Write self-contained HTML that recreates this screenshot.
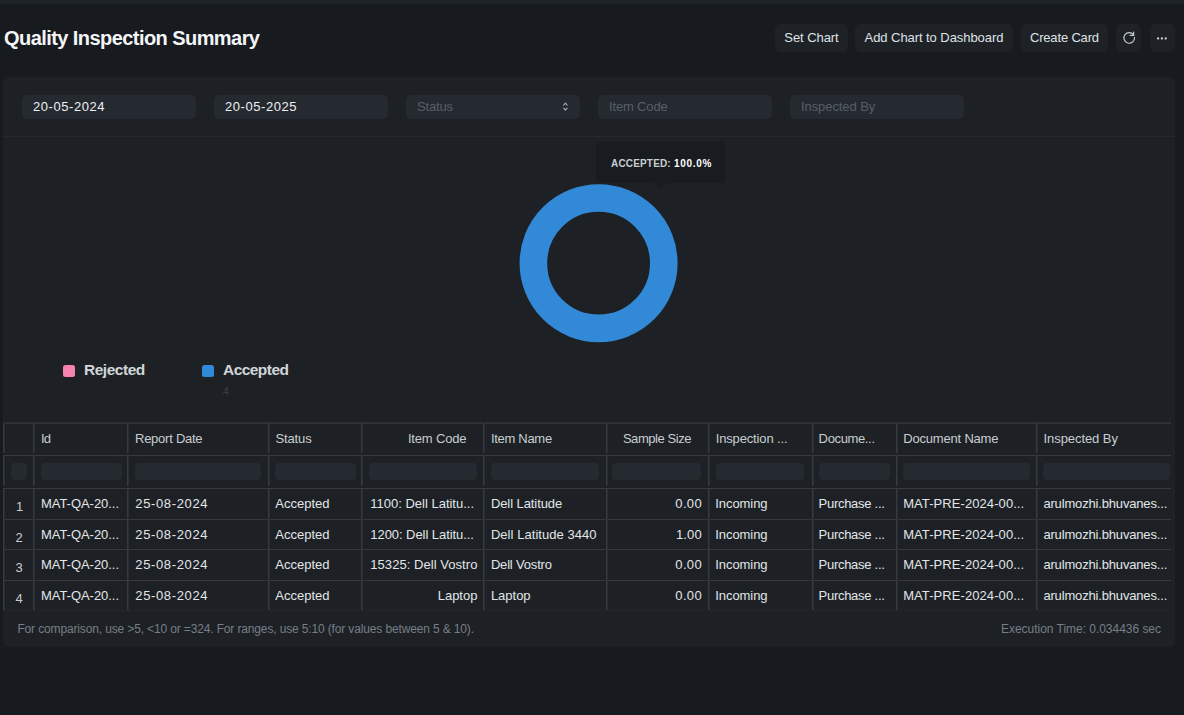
<!DOCTYPE html>
<html><head><meta charset="utf-8">
<style>
*{box-sizing:border-box;margin:0;padding:0}
html,body{width:1184px;height:715px;overflow:hidden;background:#171a1f;font-family:"Liberation Sans",sans-serif}
.b{position:absolute}
.t{position:absolute;white-space:nowrap}
</style></head><body>
<div class="b" style="left:0;top:0;width:1184px;height:4px;background:#1e2327"></div>
<div class="t" style="left:4.00px;top:23.99px;font-size:20px;line-height:28px;letter-spacing:-0.564px;color:#f4f5f6;font-weight:bold;">Quality Inspection Summary</div>
<div class="b" style="left:775px;top:24px;width:73px;height:28px;background:#1e2226;border-radius:6px"></div>
<div class="t" style="left:784.35px;top:28.70px;font-size:13px;line-height:18px;letter-spacing:-0.075px;color:#dfe3e6;font-weight:normal;">Set Chart</div>
<div class="b" style="left:855px;top:24px;width:158px;height:28px;background:#1e2226;border-radius:6px"></div>
<div class="t" style="left:864.60px;top:28.70px;font-size:13px;line-height:18px;letter-spacing:-0.067px;color:#dfe3e6;font-weight:normal;">Add Chart to Dashboard</div>
<div class="b" style="left:1021px;top:24px;width:87px;height:28px;background:#1e2226;border-radius:6px"></div>
<div class="t" style="left:1029.95px;top:28.70px;font-size:13px;line-height:18px;letter-spacing:-0.170px;color:#dfe3e6;font-weight:normal;">Create Card</div>
<div class="b" style="left:1116px;top:24px;width:25px;height:28px;background:#1e2226;border-radius:6px"></div>
<div class="b" style="left:1149.5px;top:24px;width:25px;height:28px;background:#1e2226;border-radius:6px"></div>
<svg class="b" style="left:1116px;top:24px" width="25" height="27" viewBox="0 0 25 27"><path d="M18.48 13.44 A5.3 5.3 0 1 1 17.74 11.17" fill="none" stroke="#c4c9ce" stroke-width="1.15" stroke-linecap="round"/><path d="M17.6 8.0 L17.6 11.4 L14.1 11.4" fill="none" stroke="#c4c9ce" stroke-width="1.15" stroke-linecap="round" stroke-linejoin="round"/></svg>
<svg class="b" style="left:1150px;top:24px" width="25" height="28" viewBox="0 0 25 28"><circle cx="8.1" cy="14.5" r="1.15" fill="#c8cdd2"/><circle cx="11.9" cy="14.5" r="1.15" fill="#c8cdd2"/><circle cx="15.7" cy="14.5" r="1.15" fill="#c8cdd2"/></svg>
<div class="b" style="left:3px;top:77px;width:1172px;height:570px;background:#1d2125;border-radius:6px"></div>
<div class="b" style="left:22px;top:94.5px;width:173.5px;height:24px;background:#252a30;border-radius:5px"></div>
<div class="t" style="left:33.00px;top:97.70px;font-size:13px;line-height:18px;letter-spacing:0.556px;color:#eef0f2;font-weight:normal;">20-05-2024</div>
<div class="b" style="left:214px;top:94.5px;width:173.5px;height:24px;background:#252a30;border-radius:5px"></div>
<div class="t" style="left:225.00px;top:97.70px;font-size:13px;line-height:18px;letter-spacing:0.556px;color:#eef0f2;font-weight:normal;">20-05-2025</div>
<div class="b" style="left:406px;top:94.5px;width:173.5px;height:24px;background:#252a30;border-radius:5px"></div>
<div class="t" style="left:417.00px;top:97.70px;font-size:13px;line-height:18px;letter-spacing:-0.170px;color:#575f66;font-weight:normal;">Status</div>
<div class="b" style="left:598px;top:94.5px;width:173.5px;height:24px;background:#252a30;border-radius:5px"></div>
<div class="t" style="left:609.00px;top:97.70px;font-size:13px;line-height:18px;letter-spacing:-0.156px;color:#575f66;font-weight:normal;">Item Code</div>
<div class="b" style="left:790px;top:94.5px;width:173.5px;height:24px;background:#252a30;border-radius:5px"></div>
<div class="t" style="left:801.00px;top:97.70px;font-size:13px;line-height:18px;letter-spacing:-0.077px;color:#575f66;font-weight:normal;">Inspected By</div>
<svg class="b" style="left:560px;top:100px" width="10" height="12" viewBox="0 0 10 12"><path d="M3.7 5.1 L5.4 3.2 L7.1 5.1 M3.7 8.2 L5.4 10.1 L7.1 8.2" fill="none" stroke="#a7aeb4" stroke-width="1.1" stroke-linecap="round" stroke-linejoin="round"/></svg>
<div class="b" style="left:3px;top:136px;width:1172px;height:1px;background:#25292e"></div>
<svg class="b" style="left:0;top:0" width="1184" height="715"><circle cx="598.6" cy="263.2" r="65.2" fill="none" stroke="#3189d8" stroke-width="27.6"/></svg>
<div class="b" style="left:596px;top:142px;width:130px;height:41px;background:#181b1f;border-radius:5px"></div>
<svg class="b" style="left:653px;top:182px" width="16" height="8" viewBox="0 0 16 8"><path d="M0 0 L8 6.5 L16 0 Z" fill="#181b1f"/></svg>
<div class="t" style="left:611.00px;top:157.19px;font-size:10px;line-height:14px;letter-spacing:0.169px;color:#c8cdd2;font-weight:bold;">ACCEPTED:</div>
<div class="t" style="left:674.00px;top:157.19px;font-size:10px;line-height:14px;letter-spacing:0.680px;color:#ffffff;font-weight:bold;">100.0%</div>
<div class="b" style="left:63px;top:365px;width:11.5px;height:11.5px;background:#f683ae;border-radius:2.5px"></div>
<div class="t" style="left:84.00px;top:359.18px;font-size:15.5px;line-height:22px;letter-spacing:-0.471px;color:#d0d5d8;font-weight:bold;">Rejected</div>
<div class="b" style="left:202px;top:365px;width:11.5px;height:11.5px;background:#318ad8;border-radius:2.5px"></div>
<div class="t" style="left:223.00px;top:359.18px;font-size:15.5px;line-height:22px;letter-spacing:-0.550px;color:#d0d5d8;font-weight:bold;">Accepted</div>
<div class="t" style="left:223.00px;top:383.53px;font-size:10.5px;line-height:15px;letter-spacing:0.000px;color:#3b4147;font-weight:normal;">4</div>
<div class="b" style="left:3px;top:422px;width:1168px;height:1px;background:#2b2f35"></div>
<div class="b" style="left:3px;top:423px;width:1168px;height:1px;background:repeating-linear-gradient(90deg,#33373e 0 2px,#24282d 2px 3px)"></div>
<div class="b" style="left:3px;top:455px;width:1168px;height:1px;background:#353a41"></div>
<div class="b" style="left:3px;top:488px;width:1168px;height:1px;background:#353a41"></div>
<div class="b" style="left:3px;top:519px;width:1168px;height:1px;background:#353a41"></div>
<div class="b" style="left:3px;top:549px;width:1168px;height:1px;background:#353a41"></div>
<div class="b" style="left:3px;top:580px;width:1168px;height:1px;background:#353a41"></div>
<div class="b" style="left:3px;top:610px;width:1168px;height:1px;background:#23272c"></div>
<div class="b" style="left:3px;top:423px;width:1px;height:30px;background:#353a41"></div>
<div class="b" style="left:4px;top:423px;width:1px;height:30px;background:#292e34"></div>
<div class="b" style="left:3px;top:456px;width:1px;height:30px;background:#353a41"></div>
<div class="b" style="left:4px;top:456px;width:1px;height:30px;background:#292e34"></div>
<div class="b" style="left:3px;top:489px;width:1px;height:121px;background:#353a41"></div>
<div class="b" style="left:4px;top:489px;width:1px;height:121px;background:#292e34"></div>
<div class="b" style="left:33px;top:423px;width:1px;height:30px;background:#353a41"></div>
<div class="b" style="left:34px;top:423px;width:1px;height:30px;background:#292e34"></div>
<div class="b" style="left:33px;top:456px;width:1px;height:30px;background:#353a41"></div>
<div class="b" style="left:34px;top:456px;width:1px;height:30px;background:#292e34"></div>
<div class="b" style="left:33px;top:489px;width:1px;height:121px;background:#353a41"></div>
<div class="b" style="left:34px;top:489px;width:1px;height:121px;background:#292e34"></div>
<div class="b" style="left:127px;top:423px;width:1px;height:30px;background:#353a41"></div>
<div class="b" style="left:128px;top:423px;width:1px;height:30px;background:#292e34"></div>
<div class="b" style="left:127px;top:456px;width:1px;height:30px;background:#353a41"></div>
<div class="b" style="left:128px;top:456px;width:1px;height:30px;background:#292e34"></div>
<div class="b" style="left:127px;top:489px;width:1px;height:121px;background:#353a41"></div>
<div class="b" style="left:128px;top:489px;width:1px;height:121px;background:#292e34"></div>
<div class="b" style="left:268px;top:423px;width:1px;height:30px;background:#353a41"></div>
<div class="b" style="left:269px;top:423px;width:1px;height:30px;background:#292e34"></div>
<div class="b" style="left:268px;top:456px;width:1px;height:30px;background:#353a41"></div>
<div class="b" style="left:269px;top:456px;width:1px;height:30px;background:#292e34"></div>
<div class="b" style="left:268px;top:489px;width:1px;height:121px;background:#353a41"></div>
<div class="b" style="left:269px;top:489px;width:1px;height:121px;background:#292e34"></div>
<div class="b" style="left:361px;top:423px;width:1px;height:30px;background:#353a41"></div>
<div class="b" style="left:362px;top:423px;width:1px;height:30px;background:#292e34"></div>
<div class="b" style="left:361px;top:456px;width:1px;height:30px;background:#353a41"></div>
<div class="b" style="left:362px;top:456px;width:1px;height:30px;background:#292e34"></div>
<div class="b" style="left:361px;top:489px;width:1px;height:121px;background:#353a41"></div>
<div class="b" style="left:362px;top:489px;width:1px;height:121px;background:#292e34"></div>
<div class="b" style="left:483px;top:423px;width:1px;height:30px;background:#353a41"></div>
<div class="b" style="left:484px;top:423px;width:1px;height:30px;background:#292e34"></div>
<div class="b" style="left:483px;top:456px;width:1px;height:30px;background:#353a41"></div>
<div class="b" style="left:484px;top:456px;width:1px;height:30px;background:#292e34"></div>
<div class="b" style="left:483px;top:489px;width:1px;height:121px;background:#353a41"></div>
<div class="b" style="left:484px;top:489px;width:1px;height:121px;background:#292e34"></div>
<div class="b" style="left:606px;top:423px;width:1px;height:30px;background:#353a41"></div>
<div class="b" style="left:607px;top:423px;width:1px;height:30px;background:#292e34"></div>
<div class="b" style="left:606px;top:456px;width:1px;height:30px;background:#353a41"></div>
<div class="b" style="left:607px;top:456px;width:1px;height:30px;background:#292e34"></div>
<div class="b" style="left:606px;top:489px;width:1px;height:121px;background:#353a41"></div>
<div class="b" style="left:607px;top:489px;width:1px;height:121px;background:#292e34"></div>
<div class="b" style="left:708px;top:423px;width:1px;height:30px;background:#353a41"></div>
<div class="b" style="left:709px;top:423px;width:1px;height:30px;background:#292e34"></div>
<div class="b" style="left:708px;top:456px;width:1px;height:30px;background:#353a41"></div>
<div class="b" style="left:709px;top:456px;width:1px;height:30px;background:#292e34"></div>
<div class="b" style="left:708px;top:489px;width:1px;height:121px;background:#353a41"></div>
<div class="b" style="left:709px;top:489px;width:1px;height:121px;background:#292e34"></div>
<div class="b" style="left:812px;top:423px;width:1px;height:30px;background:#353a41"></div>
<div class="b" style="left:813px;top:423px;width:1px;height:30px;background:#292e34"></div>
<div class="b" style="left:812px;top:456px;width:1px;height:30px;background:#353a41"></div>
<div class="b" style="left:813px;top:456px;width:1px;height:30px;background:#292e34"></div>
<div class="b" style="left:812px;top:489px;width:1px;height:121px;background:#353a41"></div>
<div class="b" style="left:813px;top:489px;width:1px;height:121px;background:#292e34"></div>
<div class="b" style="left:896px;top:423px;width:1px;height:30px;background:#353a41"></div>
<div class="b" style="left:897px;top:423px;width:1px;height:30px;background:#292e34"></div>
<div class="b" style="left:896px;top:456px;width:1px;height:30px;background:#353a41"></div>
<div class="b" style="left:897px;top:456px;width:1px;height:30px;background:#292e34"></div>
<div class="b" style="left:896px;top:489px;width:1px;height:121px;background:#353a41"></div>
<div class="b" style="left:897px;top:489px;width:1px;height:121px;background:#292e34"></div>
<div class="b" style="left:1036px;top:423px;width:1px;height:30px;background:#353a41"></div>
<div class="b" style="left:1037px;top:423px;width:1px;height:30px;background:#292e34"></div>
<div class="b" style="left:1036px;top:456px;width:1px;height:30px;background:#353a41"></div>
<div class="b" style="left:1037px;top:456px;width:1px;height:30px;background:#292e34"></div>
<div class="b" style="left:1036px;top:489px;width:1px;height:121px;background:#353a41"></div>
<div class="b" style="left:1037px;top:489px;width:1px;height:121px;background:#292e34"></div>
<div class="b" style="left:10.5px;top:463px;width:16.5px;height:17px;background:#252a30;border-radius:4px"></div>
<div class="b" style="left:41px;top:463px;width:80.5px;height:17px;background:#252a30;border-radius:4px"></div>
<div class="b" style="left:135px;top:463px;width:126px;height:17px;background:#252a30;border-radius:4px"></div>
<div class="b" style="left:275px;top:463px;width:81px;height:17px;background:#252a30;border-radius:4px"></div>
<div class="b" style="left:369px;top:463px;width:108px;height:17px;background:#252a30;border-radius:4px"></div>
<div class="b" style="left:490.6px;top:463px;width:108.89999999999998px;height:17px;background:#252a30;border-radius:4px"></div>
<div class="b" style="left:612.3px;top:463px;width:89.20000000000005px;height:17px;background:#252a30;border-radius:4px"></div>
<div class="b" style="left:715.9px;top:463px;width:88.60000000000002px;height:17px;background:#252a30;border-radius:4px"></div>
<div class="b" style="left:818.5px;top:463px;width:71.5px;height:17px;background:#252a30;border-radius:4px"></div>
<div class="b" style="left:903.4px;top:463px;width:126.60000000000002px;height:17px;background:#252a30;border-radius:4px"></div>
<div class="b" style="left:1043.4px;top:463px;width:126.29999999999995px;height:17px;background:#252a30;border-radius:4px"></div>
<div class="t" style="left:41.00px;top:429.70px;font-size:13px;line-height:18px;letter-spacing:-0.850px;color:#c8cdd2;font-weight:normal;">Id</div>
<div class="t" style="left:135.00px;top:429.70px;font-size:13px;line-height:18px;letter-spacing:-0.250px;color:#c8cdd2;font-weight:normal;">Report Date</div>
<div class="t" style="left:275.50px;top:429.70px;font-size:13px;line-height:18px;letter-spacing:-0.130px;color:#c8cdd2;font-weight:normal;">Status</div>
<div class="t" style="left:407.90px;top:429.70px;font-size:13px;line-height:18px;letter-spacing:-0.169px;color:#c8cdd2;font-weight:normal;">Item Code</div>
<div class="t" style="left:491.00px;top:429.70px;font-size:13px;line-height:18px;letter-spacing:-0.306px;color:#c8cdd2;font-weight:normal;">Item Name</div>
<div class="t" style="left:622.90px;top:429.70px;font-size:13px;line-height:18px;letter-spacing:-0.440px;color:#c8cdd2;font-weight:normal;">Sample Size</div>
<div class="t" style="left:715.70px;top:429.70px;font-size:13px;line-height:18px;letter-spacing:-0.146px;color:#c8cdd2;font-weight:normal;">Inspection ...</div>
<div class="t" style="left:818.60px;top:429.70px;font-size:13px;line-height:18px;letter-spacing:-0.356px;color:#c8cdd2;font-weight:normal;">Docume...</div>
<div class="t" style="left:903.30px;top:429.70px;font-size:13px;line-height:18px;letter-spacing:-0.196px;color:#c8cdd2;font-weight:normal;">Document Name</div>
<div class="t" style="left:1043.50px;top:429.70px;font-size:13px;line-height:18px;letter-spacing:-0.068px;color:#c8cdd2;font-weight:normal;">Inspected By</div>
<div class="t" style="left:16.00px;top:497.70px;font-size:13px;line-height:18px;letter-spacing:0.000px;color:#c8cdd2;font-weight:normal;">1</div>
<div class="t" style="left:41.00px;top:494.70px;font-size:13px;line-height:18px;letter-spacing:-0.045px;color:#e2e6e9;font-weight:normal;">MAT-QA-20...</div>
<div class="t" style="left:135.30px;top:494.70px;font-size:13px;line-height:18px;letter-spacing:0.633px;color:#e2e6e9;font-weight:normal;">25-08-2024</div>
<div class="t" style="left:275.30px;top:494.70px;font-size:13px;line-height:18px;letter-spacing:0.000px;color:#e2e6e9;font-weight:normal;">Accepted</div>
<div class="t" style="left:370.30px;top:494.70px;font-size:13px;line-height:18px;letter-spacing:-0.005px;color:#e2e6e9;font-weight:normal;">1100: Dell Latitu...</div>
<div class="t" style="left:490.90px;top:494.70px;font-size:13px;line-height:18px;letter-spacing:-0.079px;color:#e2e6e9;font-weight:normal;">Dell Latitude</div>
<div class="t" style="left:675.30px;top:494.70px;font-size:13px;line-height:18px;letter-spacing:0.367px;color:#e2e6e9;font-weight:normal;">0.00</div>
<div class="t" style="left:715.20px;top:494.70px;font-size:13px;line-height:18px;letter-spacing:-0.050px;color:#e2e6e9;font-weight:normal;">Incoming</div>
<div class="t" style="left:818.60px;top:494.70px;font-size:13px;line-height:18px;letter-spacing:-0.286px;color:#e2e6e9;font-weight:normal;">Purchase ...</div>
<div class="t" style="left:903.20px;top:494.70px;font-size:13px;line-height:18px;letter-spacing:0.076px;color:#e2e6e9;font-weight:normal;">MAT-PRE-2024-00...</div>
<div class="t" style="left:1043.40px;top:494.70px;font-size:13px;line-height:18px;letter-spacing:-0.165px;color:#e2e6e9;font-weight:normal;">arulmozhi.bhuvanes...</div>
<div class="t" style="left:15.50px;top:528.70px;font-size:13px;line-height:18px;letter-spacing:0.000px;color:#c8cdd2;font-weight:normal;">2</div>
<div class="t" style="left:41.00px;top:525.70px;font-size:13px;line-height:18px;letter-spacing:-0.045px;color:#e2e6e9;font-weight:normal;">MAT-QA-20...</div>
<div class="t" style="left:135.30px;top:525.70px;font-size:13px;line-height:18px;letter-spacing:0.633px;color:#e2e6e9;font-weight:normal;">25-08-2024</div>
<div class="t" style="left:275.30px;top:525.70px;font-size:13px;line-height:18px;letter-spacing:0.000px;color:#e2e6e9;font-weight:normal;">Accepted</div>
<div class="t" style="left:370.30px;top:525.70px;font-size:13px;line-height:18px;letter-spacing:-0.058px;color:#e2e6e9;font-weight:normal;">1200: Dell Latitu...</div>
<div class="t" style="left:490.90px;top:525.70px;font-size:13px;line-height:18px;letter-spacing:0.053px;color:#e2e6e9;font-weight:normal;">Dell Latitude 3440</div>
<div class="t" style="left:676.00px;top:525.70px;font-size:13px;line-height:18px;letter-spacing:0.133px;color:#e2e6e9;font-weight:normal;">1.00</div>
<div class="t" style="left:715.20px;top:525.70px;font-size:13px;line-height:18px;letter-spacing:-0.050px;color:#e2e6e9;font-weight:normal;">Incoming</div>
<div class="t" style="left:818.60px;top:525.70px;font-size:13px;line-height:18px;letter-spacing:-0.286px;color:#e2e6e9;font-weight:normal;">Purchase ...</div>
<div class="t" style="left:903.20px;top:525.70px;font-size:13px;line-height:18px;letter-spacing:0.076px;color:#e2e6e9;font-weight:normal;">MAT-PRE-2024-00...</div>
<div class="t" style="left:1043.40px;top:525.70px;font-size:13px;line-height:18px;letter-spacing:-0.165px;color:#e2e6e9;font-weight:normal;">arulmozhi.bhuvanes...</div>
<div class="t" style="left:15.50px;top:559.20px;font-size:13px;line-height:18px;letter-spacing:0.000px;color:#c8cdd2;font-weight:normal;">3</div>
<div class="t" style="left:41.00px;top:556.20px;font-size:13px;line-height:18px;letter-spacing:-0.045px;color:#e2e6e9;font-weight:normal;">MAT-QA-20...</div>
<div class="t" style="left:135.30px;top:556.20px;font-size:13px;line-height:18px;letter-spacing:0.633px;color:#e2e6e9;font-weight:normal;">25-08-2024</div>
<div class="t" style="left:275.30px;top:556.20px;font-size:13px;line-height:18px;letter-spacing:0.000px;color:#e2e6e9;font-weight:normal;">Accepted</div>
<div class="t" style="left:370.30px;top:556.20px;font-size:13px;line-height:18px;letter-spacing:0.050px;color:#e2e6e9;font-weight:normal;">15325: Dell Vostro</div>
<div class="t" style="left:490.90px;top:556.20px;font-size:13px;line-height:18px;letter-spacing:-0.175px;color:#e2e6e9;font-weight:normal;">Dell Vostro</div>
<div class="t" style="left:675.30px;top:556.20px;font-size:13px;line-height:18px;letter-spacing:0.367px;color:#e2e6e9;font-weight:normal;">0.00</div>
<div class="t" style="left:715.20px;top:556.20px;font-size:13px;line-height:18px;letter-spacing:-0.050px;color:#e2e6e9;font-weight:normal;">Incoming</div>
<div class="t" style="left:818.60px;top:556.20px;font-size:13px;line-height:18px;letter-spacing:-0.286px;color:#e2e6e9;font-weight:normal;">Purchase ...</div>
<div class="t" style="left:903.20px;top:556.20px;font-size:13px;line-height:18px;letter-spacing:0.076px;color:#e2e6e9;font-weight:normal;">MAT-PRE-2024-00...</div>
<div class="t" style="left:1043.40px;top:556.20px;font-size:13px;line-height:18px;letter-spacing:-0.165px;color:#e2e6e9;font-weight:normal;">arulmozhi.bhuvanes...</div>
<div class="t" style="left:15.50px;top:589.70px;font-size:13px;line-height:18px;letter-spacing:0.000px;color:#c8cdd2;font-weight:normal;">4</div>
<div class="t" style="left:41.00px;top:586.70px;font-size:13px;line-height:18px;letter-spacing:-0.045px;color:#e2e6e9;font-weight:normal;">MAT-QA-20...</div>
<div class="t" style="left:135.30px;top:586.70px;font-size:13px;line-height:18px;letter-spacing:0.633px;color:#e2e6e9;font-weight:normal;">25-08-2024</div>
<div class="t" style="left:275.30px;top:586.70px;font-size:13px;line-height:18px;letter-spacing:0.000px;color:#e2e6e9;font-weight:normal;">Accepted</div>
<div class="t" style="left:437.70px;top:586.70px;font-size:13px;line-height:18px;letter-spacing:-0.010px;color:#e2e6e9;font-weight:normal;">Laptop</div>
<div class="t" style="left:490.90px;top:586.70px;font-size:13px;line-height:18px;letter-spacing:-0.010px;color:#e2e6e9;font-weight:normal;">Laptop</div>
<div class="t" style="left:675.30px;top:586.70px;font-size:13px;line-height:18px;letter-spacing:0.367px;color:#e2e6e9;font-weight:normal;">0.00</div>
<div class="t" style="left:715.20px;top:586.70px;font-size:13px;line-height:18px;letter-spacing:-0.050px;color:#e2e6e9;font-weight:normal;">Incoming</div>
<div class="t" style="left:818.60px;top:586.70px;font-size:13px;line-height:18px;letter-spacing:-0.286px;color:#e2e6e9;font-weight:normal;">Purchase ...</div>
<div class="t" style="left:903.20px;top:586.70px;font-size:13px;line-height:18px;letter-spacing:0.076px;color:#e2e6e9;font-weight:normal;">MAT-PRE-2024-00...</div>
<div class="t" style="left:1043.40px;top:586.70px;font-size:13px;line-height:18px;letter-spacing:-0.165px;color:#e2e6e9;font-weight:normal;">arulmozhi.bhuvanes...</div>
<div class="t" style="left:17.40px;top:621.33px;font-size:12px;line-height:17px;letter-spacing:-0.141px;color:#767e86;font-weight:normal;">For comparison, use >5, <10 or =324. For ranges, use 5:10 (for values between 5 &amp; 10).</div>
<div class="t" style="left:1001.00px;top:621.33px;font-size:12px;line-height:17px;letter-spacing:-0.028px;color:#767e86;font-weight:normal;">Execution Time: 0.034436 sec</div>
</body></html>
